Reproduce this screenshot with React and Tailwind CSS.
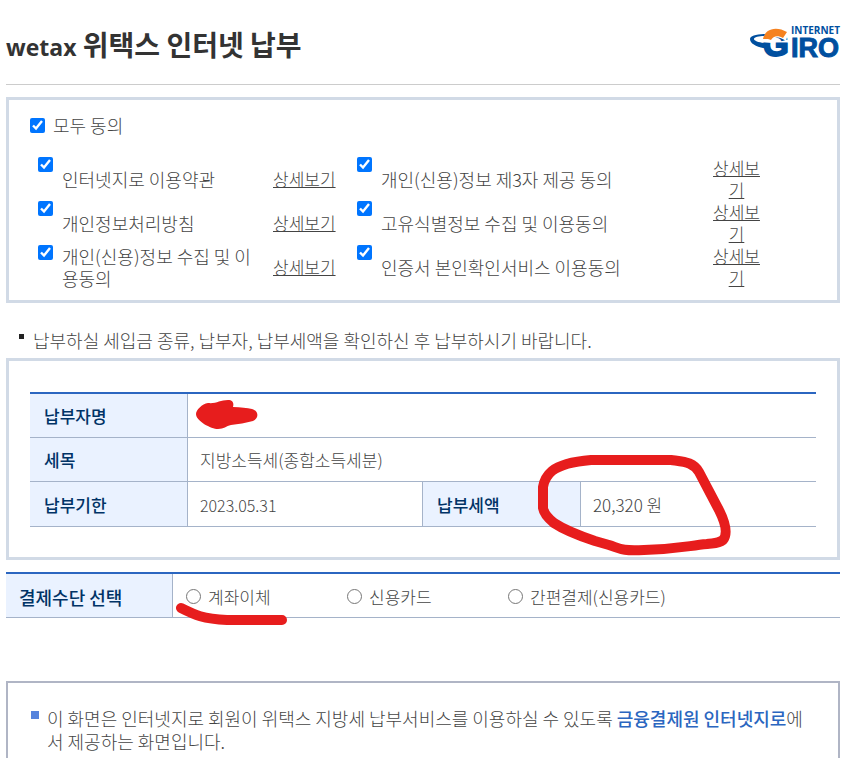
import { useState } from "react";

const agreements = [
  ["인터넷지로 이용약관", "개인(신용)정보 제3자 제공 동의"],
  ["개인정보처리방침", "고유식별정보 수집 및 이용동의"],
  ["개인(신용)정보 수집 및 이용동의", "인증서 본인확인서비스 이용동의"],
];

const methods = ["계좌이체", "신용카드", "간편결제(신용카드)"];

function GiroLogo() {
  return (
    <svg
      width="92"
      height="36"
      viewBox="0 0 92 36"
      role="img"
      aria-label="Internet Giro"
      className="overflow-visible font-bold font-['Liberation_Sans',sans-serif]"
    >
      <text x="15" y="32" fontSize="33" fill="#004f9f" stroke="#004f9f" strokeWidth="2">
        G
      </text>
      <path d="M12 18 C13 2 30 -1 41 6 L38 17 C31 12 26 12 24 19 Z" fill="#ffffff" />
      <path d="M15 15 C17 4 29 2 39 8 L35 14 C30 11 25 12 23 16 L20 15 Z" fill="#f58220" />
      <path
        d="M17 10 C8 10 2 12 2 15 C2 20 9 23 19 25 L19 19 C12 19 6 17 6 15 C6 13 11 12 16 12 Z"
        fill="#004f9f"
      />
      <text x="43" y="10" fontSize="10" fill="#004f9f" className="font-['Open_Sans',sans-serif]">
        INTERNET
      </text>
      <text x="43" y="33" fontSize="27" fill="#004f9f" stroke="#004f9f" strokeWidth="1">
        IRO
      </text>
    </svg>
  );
}

function AgreeItem({ id, label, checked, onChange, narrow }) {
  return (
    <>
      <input
        id={id}
        type="checkbox"
        checked={checked}
        onChange={onChange}
        className="w-[15px] h-[15px] self-start accent-[#0075ff]"
      />
      <label htmlFor={id} className="pr-4 text-lg leading-[22px]">
        {label}
      </label>
      <a href="#detail" aria-label={`${label} 상세보기`} className={`underline ${narrow ? "text-center" : ""}`}>
        상세보기
      </a>
    </>
  );
}

function HeadCell({ children, className }) {
  return (
    <th
      scope="row"
      className={`bg-[#eaf2ff] border-r border-b border-[#a5b3c9] text-left font-medium text-[#003366] ${className}`}
    >
      {children}
    </th>
  );
}

export default function App() {
  const [checks, setChecks] = useState([true, true, true, true, true, true]);
  const [method, setMethod] = useState("");
  const all = checks.every(Boolean);

  const toggle = (i) => setChecks(checks.map((c, n) => (n === i ? !c : c)));

  return (
    <div className="min-h-screen flex flex-col bg-white pl-1.5 pr-2 text-[17px] leading-[22px] text-[#444444] font-light font-['Noto_Sans_CJK_KR',sans-serif]">
      <header className="flex items-start justify-between h-[85px] pt-6 border-b border-[#cccccc]">
        <h1 className="text-[28px] leading-10 font-bold text-[#333333]">
          <span className="text-[23px] font-['Open_Sans',sans-serif]">wetax</span> 위택스 인터넷 납부
        </h1>
        <GiroLogo />
      </header>

      <section className="mt-3 border-3 border-[#d1dae6] px-[21px] pt-3.5 pb-[11px]">
        <div className="flex items-center gap-2">
          <input
            id="agree-all"
            type="checkbox"
            checked={all}
            onChange={() => setChecks(checks.map(() => !all))}
            className="w-[15px] h-[15px] accent-[#0075ff]"
          />
          <label htmlFor="agree-all" className="text-lg leading-[22px]">
            모두 동의
          </label>
        </div>
        <div className="mt-[21px] pl-2 pr-[55px] grid grid-cols-[24px_211fr_84px_24px_331fr_49px] auto-rows-[44px] items-center">
          {agreements.map(([left, right], i) => [
            <AgreeItem
              key={left}
              id={`agree-${i * 2}`}
              label={left}
              checked={checks[i * 2]}
              onChange={() => toggle(i * 2)}
            />,
            <AgreeItem
              key={right}
              id={`agree-${i * 2 + 1}`}
              label={right}
              checked={checks[i * 2 + 1]}
              onChange={() => toggle(i * 2 + 1)}
              narrow
            />,
          ])}
        </div>
      </section>

      <p className="mt-[26px] mb-[7px] pl-[13px] flex gap-[9px] text-lg leading-[22px]">
        <span className="w-[5px] h-[5px] mt-[5px] bg-[#222222]" />
        납부하실 세입금 종류, 납부자, 납부세액을 확인하신 후 납부하시기 바랍니다.
      </p>

      <section className="border-3 border-[#d1dae6] px-[21px] pt-[31px] pb-[30px]">
        <table className="w-full table-fixed border-separate border-spacing-0 border-t-2 border-[#2b66c0]">
          <colgroup>
            <col className="w-[158px]" />
            <col />
            <col className="w-[158px]" />
            <col />
          </colgroup>
          <tbody>
            <tr className="h-11">
              <HeadCell className="pl-3.5">납부자명</HeadCell>
              <td colSpan={3} className="relative border-b border-[#a5b3c9]">
                <svg className="absolute left-2 top-1.5" width="64" height="32" viewBox="0 0 64 32" aria-hidden="true">
                  <path
                    d="M0 14 C0 10 6 4 12 3 C20 4 24 0 32 0 C37 0 38 3 37 7 C45 7 51 8 56 9 C63 11 63 18 57 21 C50 23 42 24 35 25 C30 26 28 29 22 29 C15 29 0 21 0 14 Z"
                    fill="#e71d1d"
                  />
                </svg>
              </td>
            </tr>
            <tr className="h-11">
              <HeadCell className="pl-3.5">세목</HeadCell>
              <td colSpan={3} className="pl-3 border-b border-[#a5b3c9]">
                지방소득세(종합소득세분)
              </td>
            </tr>
            <tr className="h-[45px]">
              <HeadCell className="pl-3.5 pt-0.5">납부기한</HeadCell>
              <td className="pl-3 pt-0.5 border-r border-b border-[#a5b3c9] text-base">2023.05.31</td>
              <HeadCell className="pl-3.5 pt-0.5">납부세액</HeadCell>
              <td className="relative pl-3 pt-0.5 border-b border-[#a5b3c9]">
                20,320 원
                <svg
                  className="absolute -left-11 -top-7 pointer-events-none"
                  width="198"
                  height="104"
                  viewBox="0 0 198 104"
                  aria-hidden="true"
                >
                  <path
                    d="M54 6 H134 C148 8 156 8 162 18 L182 56 C189 70 191 80 186 86 C181 90 176 89 170 90 C150 92 140 95 107 96 C84 97 84 95 72 91 L58 87 C40 81 26 75 17 69 C12 65 7 60 6 54 V33 C7 27 9 22 15 17 C25 9 42 7 54 6 Z"
                    fill="none"
                    stroke="#e71d1d"
                    strokeWidth="10"
                    strokeLinejoin="round"
                  />
                </svg>
              </td>
            </tr>
          </tbody>
        </table>
      </section>

      <table className="mt-3 w-full table-fixed border-separate border-spacing-0 border-t-2 border-[#2b66c0]">
        <colgroup>
          <col className="w-[167px]" />
          <col />
        </colgroup>
        <tbody>
          <tr className="h-11">
            <HeadCell className="pl-[13px] pt-0.5 text-lg leading-[22px]">결제수단 선택</HeadCell>
            <td className="relative pl-[13px] pt-0.5 border-b border-[#a5b3c9]">
              <div className="flex">
                {methods.map((name, i) => (
                  <div key={name} className="flex items-center gap-[7px] min-w-[161px]">
                    <input
                      id={`method-${i}`}
                      type="radio"
                      name="method"
                      checked={method === name}
                      onChange={() => setMethod(name)}
                      className="w-[15px] h-[15px]"
                    />
                    <label htmlFor={`method-${i}`}>{name}</label>
                  </div>
                ))}
              </div>
              <svg
                className="absolute left-0 top-7 pointer-events-none"
                width="118"
                height="26"
                viewBox="0 0 118 26"
                aria-hidden="true"
              >
                <path
                  d="M8 6 C22 13 30 17 54 18 H109"
                  fill="none"
                  stroke="#e71d1d"
                  strokeWidth="10"
                  strokeLinecap="round"
                />
              </svg>
            </td>
          </tr>
        </tbody>
      </table>

      <section className="flex-1 mt-[63px] border-2 border-b-0 border-[#b0b5c5] px-[23px] pt-6">
        <p className="flex gap-2 text-lg leading-[23px]">
          <span className="w-2 h-2 mt-1 shrink-0 bg-[#5583dd]" />
          <span>
            이 화면은 인터넷지로 회원이 위택스 지방세 납부서비스를 이용하실 수 있도록{" "}
            <strong className="font-medium text-[#2b66c0]">금융결제원 인터넷지로</strong>에서 제공하는 화면입니다.
          </span>
        </p>
      </section>
    </div>
  );
}
